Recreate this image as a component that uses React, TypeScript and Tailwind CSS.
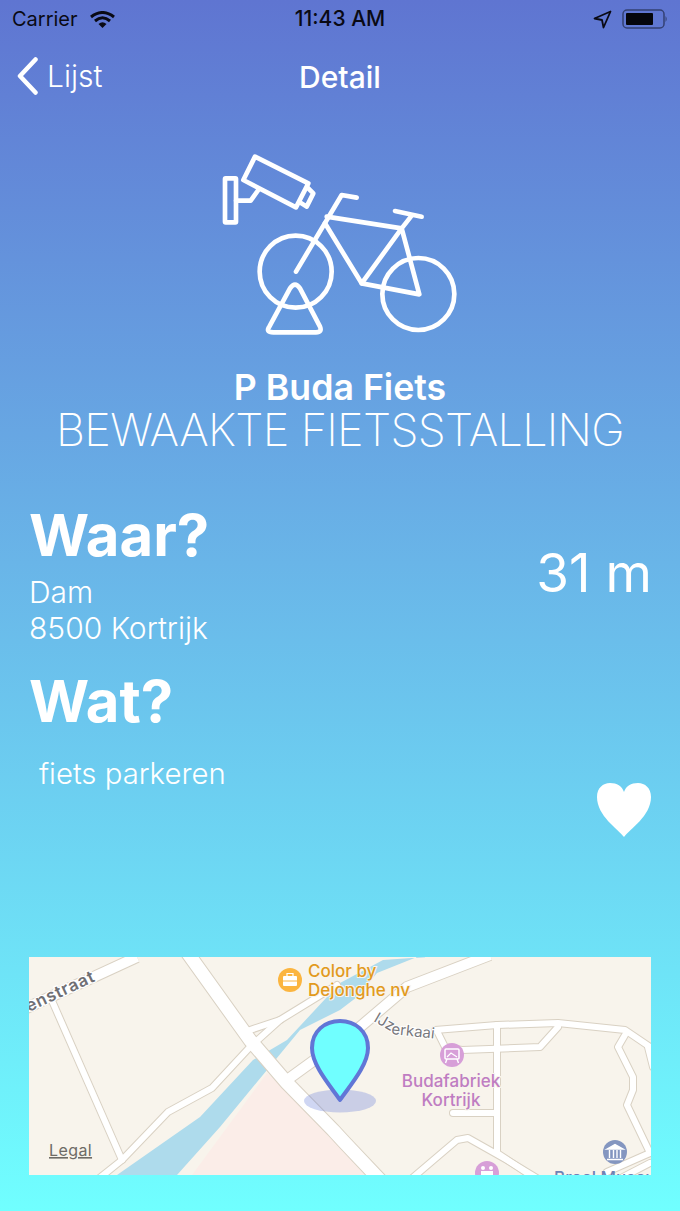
import React from "react";

const font = { fontFamily: "Inter, 'Liberation Sans', sans-serif" };

function Wifi() {
  return (
    <svg width="25" height="17" viewBox="0 0 25 17" className="ml-[12px]">
      <path d="M1 6 Q12.5 -3 24 6" fill="none" stroke="#0a0a14" strokeWidth="3" />
      <path d="M5 10 Q12.5 3.5 20 10" fill="none" stroke="#0a0a14" strokeWidth="3" />
      <path d="M8.5 13 L12.5 17 L16.5 13 Q12.5 9.5 8.5 13 Z" fill="#0a0a14" />
    </svg>
  );
}

function Battery() {
  return (
    <svg width="46" height="20" viewBox="0 0 46 20">
      <rect x="1" y="1" width="41" height="18" rx="4" fill="none" stroke="#1c2440" strokeOpacity="0.65" strokeWidth="1.5" />
      <rect x="4" y="4" width="27" height="12" rx="1" fill="#05060c" />
      <path d="M43.5 7 Q46 10 43.5 13 Z" fill="#1c2440" fillOpacity="0.6" />
    </svg>
  );
}

function Logo() {
  return (
    <svg width="260" height="200" viewBox="0 0 780 600" fill="none" stroke="#fff" strokeWidth="14" strokeLinejoin="round" strokeLinecap="round">
      <path d="M135 35 L295 115 L258 187 L100 105 Z" />
      <path d="M295 130 L310 145 L290 185 L270 172" />
      <rect x="45" y="100" width="33" height="132" rx="2" />
      <path d="M78 167 L122 167 L145 135" />
      <path d="M440 158 L395 150 L258 380" />
      <path d="M350 215 L575 250" />
      <path d="M345 235 L455 415 L575 250" />
      <path d="M555 198 L635 215" />
      <path d="M605 212 L575 250 L628 448 L455 415" />
      <circle cx="257" cy="380" r="108" />
      <circle cx="625" cy="447" r="108" />
      <path d="M240 430 Q255 408 270 430 L330 545 Q337 562 318 562 L190 562 Q166 562 178 545 Z" />
    </svg>
  );
}

function MapView() {
  const road = "#d9d1c3";
  const thin: string[] = [
    "53,1003 122,1160",
    "97,1180 122,1160 168,1112 212,1088 250,1047 280,1020 337,985",
    "250,1030 280,1020",
    "435,1030 497,1025 558,1023 625,1030 650,1047",
    "438,1033 445,1047 462,1050 540,1047 558,1027",
    "497,1025 497,1153 530,1175",
    "453,1113 497,1113",
    "410,1180 457,1140 468,1138 507,1160 540,1180",
    "625,1035 618,1047 633,1077 633,1090 627,1105 650,1153",
    "650,1153 607,1172",
    "650,1163 623,1177",
    "648,1047 653,1067",
  ];
  const wide: string[] = [
    "20,1011 137,957",
    "287,1080 360,1027 407,987 490,955",
  ];
  const big = "187,952 250,1040 287,1083 333,1130 345,1143 380,1180";
  return (
    <svg width="622" height="218" viewBox="29 957 622 218" className="block" style={{ fontFamily: "Inter, sans-serif" }}>
      <rect x="29" y="957" width="622" height="218" fill="#f8f4ec" />
      <path d="M192 1175 L267 1073 L300 1100 L345 1140 L377 1175 Z" fill="#fbede8" />
      <path d="M117 1175 L200 1117 L253 1060 L287 1040 L340 983 L383 960 L440 956 L417 957 L377 973 L357 997 L340 1010 L300 1030 L267 1070 L220 1127 L177 1175 Z" fill="#aedbec" />
      {thin.map((p) => (
        <polyline key={p} points={p} fill="none" stroke={road} strokeWidth="8" strokeLinejoin="round" strokeLinecap="round" />
      ))}
      {wide.map((p) => (
        <polyline key={p} points={p} fill="none" stroke={road} strokeWidth="12" strokeLinejoin="round" />
      ))}
      <polyline points={big} fill="none" stroke={road} strokeWidth="15" strokeLinejoin="round" />
      {thin.map((p) => (
        <polyline key={p + "w"} points={p} fill="none" stroke="#fff" strokeWidth="6" strokeLinejoin="round" strokeLinecap="round" />
      ))}
      {wide.map((p) => (
        <polyline key={p + "w"} points={p} fill="none" stroke="#fff" strokeWidth="10" strokeLinejoin="round" />
      ))}
      <polyline points={big} fill="none" stroke="#fff" strokeWidth="13" strokeLinejoin="round" />

      <text transform="translate(29 1012) rotate(-25)" fontSize="17" fontWeight="600" fill="#6f6f74" stroke="#fff" strokeWidth="2.5" paintOrder="stroke" letterSpacing="0.8">enstraat</text>
      <text transform="translate(373 1021) rotate(30)" fontSize="15" fill="#77777c" stroke="#fff" strokeWidth="2" paintOrder="stroke">IJz</text>
      <text transform="translate(391 1034) rotate(6)" fontSize="15" fill="#77777c" stroke="#fff" strokeWidth="2" paintOrder="stroke">erkaai</text>

      <circle cx="290" cy="980" r="12" fill="#fbb540" />
      <rect x="283" y="976" width="14" height="10" rx="1" fill="#fff" />
      <path d="M287 976 V973.5 H293 V976" fill="none" stroke="#fff" strokeWidth="1.2" />
      <line x1="283" y1="981" x2="297" y2="981" stroke="#fbb540" strokeWidth="1" />
      <text x="308" y="977" fontSize="17" fontWeight="500" fill="#e29a1d" stroke="#f8f4ec" strokeWidth="2" paintOrder="stroke">Color by</text>
      <text x="308" y="996" fontSize="17" fontWeight="500" fill="#e29a1d" stroke="#f8f4ec" strokeWidth="2" paintOrder="stroke">Dejonghe nv</text>

      <circle cx="452" cy="1055" r="12" fill="#d79fd8" />
      <rect x="445" y="1049" width="14" height="10" rx="1" fill="none" stroke="#fff" strokeWidth="1.5" />
      <path d="M447 1057 L451 1053 L457 1057" fill="none" stroke="#fff" strokeWidth="1.2" />
      <path d="M447 1059 L445.5 1063 M457 1059 L458.5 1063" stroke="#fff" strokeWidth="1.4" />
      <text x="451" y="1087" textAnchor="middle" fontSize="17" fontWeight="500" fill="#bf7dc2" stroke="#f8f4ec" strokeWidth="2" paintOrder="stroke">Budafabriek</text>
      <text x="451" y="1106" textAnchor="middle" fontSize="17" fontWeight="500" fill="#bf7dc2" stroke="#f8f4ec" strokeWidth="2" paintOrder="stroke">Kortrijk</text>

      <circle cx="487" cy="1173" r="12" fill="#d79fd8" />
      <circle cx="483" cy="1168" r="2" fill="#fff" />
      <circle cx="491" cy="1168" r="2" fill="#fff" />
      <rect x="481" y="1171" width="12" height="6" fill="#fff" />

      <circle cx="615" cy="1152" r="12" fill="#8496c0" />
      <path d="M607 1149 L615 1144.5 L623 1149 Z M607 1159.5 H623" fill="#fff" stroke="#fff" strokeWidth="1.4" />
      <path d="M609.5 1150 V1158 M613.5 1150 V1158 M617 1150 V1158 M620.5 1150 V1158" stroke="#fff" strokeWidth="1.4" />
      <text x="554" y="1184" fontSize="17" fontWeight="500" fill="#6f82b5">Broel Museum</text>

      <text x="49" y="1156" fontSize="16" fill="#6e6b66" textDecoration="underline" letterSpacing="0.4">Legal</text>

      <ellipse cx="340" cy="1101" rx="36" ry="11.5" fill="#6176d6" fillOpacity="0.3" />
      <path d="M340 1100 C332 1088 312 1066 312 1048 C312 1031 325 1021 340 1021 C355 1021 368 1031 368 1048 C368 1066 348 1088 340 1100 Z" fill="#70ffff" stroke="#6176d6" strokeWidth="4" strokeLinejoin="round" />
    </svg>
  );
}

export default function App() {
  return (
    <div className="w-[680px] h-[1211px] flex flex-col bg-gradient-to-b from-[#5f75d1] to-[#70ffff] text-white" style={font}>
      <div className="h-[38px] flex items-center justify-between pl-[12px] pr-[12px] text-[#0a0a14] text-[20px]">
        <div className="flex items-center w-[200px]">
          <span>Carrier</span>
          <Wifi />
        </div>
        <span className="font-medium text-[21px]">11:43 AM</span>
        <div className="flex items-center justify-end gap-[10px] w-[200px]">
          <svg width="19" height="19" viewBox="0 0 19 19">
            <path d="M17.5 1.5 L1.5 8.5 L9 10 L10.5 17.5 Z" fill="none" stroke="#0a0a14" strokeWidth="1.8" strokeLinejoin="round" />
          </svg>
          <Battery />
        </div>
      </div>

      <div className="relative h-[78px] flex items-center justify-center">
        <div className="absolute left-[17px] top-[19px] flex items-center gap-[9px]">
          <svg width="21" height="38" viewBox="0 0 21 38" fill="none" stroke="#fff" strokeWidth="4.5" strokeLinecap="round" strokeLinejoin="round">
            <path d="M18.5 2.5 L3 19 L18.5 35.5" />
          </svg>
          <span className="text-[30px] font-light leading-none">Lijst</span>
        </div>
        <span className="text-[30px] font-medium leading-none">Detail</span>
      </div>

      <div className="flex justify-center pt-[29px]">
        <Logo />
      </div>

      <div className="flex flex-col items-center mt-[22px]">
        <h1 className="text-[35.7px] font-semibold leading-[40px]">P Buda Fiets</h1>
        <p className="text-[45px] font-extralight leading-[46px] tracking-[-0.7px]">BEWAAKTE FIETSSTALLING</p>
      </div>

      <div className="flex items-start justify-between pl-[29px] pr-[28px] mt-[46px]">
        <div>
          <h2 className="text-[58px] font-bold leading-[72px] mb-[3px]">Waar?</h2>
          <p className="text-[30px] font-light leading-[36px]">Dam</p>
          <p className="text-[30px] font-light leading-[36px]">8500 Kortrijk</p>
        </div>
        <span className="text-[53px] font-normal leading-[60px] mt-[44px]">31 m</span>
      </div>

      <h2 className="pl-[29px] text-[58px] font-bold leading-[72px] mt-[19px]">Wat?</h2>

      <div className="flex items-start justify-between pl-[39px] pr-[29px] mt-[19px]">
        <p className="text-[29.3px] font-light leading-[36px]">fiets parkeren</p>
        <svg width="54" height="54" viewBox="0 0 54 54" className="mt-[27px]">
          <path d="M27 54 C21 46 0 33 0 14 C0 5 6 0 13 0 C20 0 25 3 27 9 C29 3 34 0 41 0 C48 0 54 5 54 14 C54 33 33 46 27 54 Z" fill="#fff" />
        </svg>
      </div>

      <div className="mt-[120px] mx-[29px]">
        <MapView />
      </div>
    </div>
  );
}
